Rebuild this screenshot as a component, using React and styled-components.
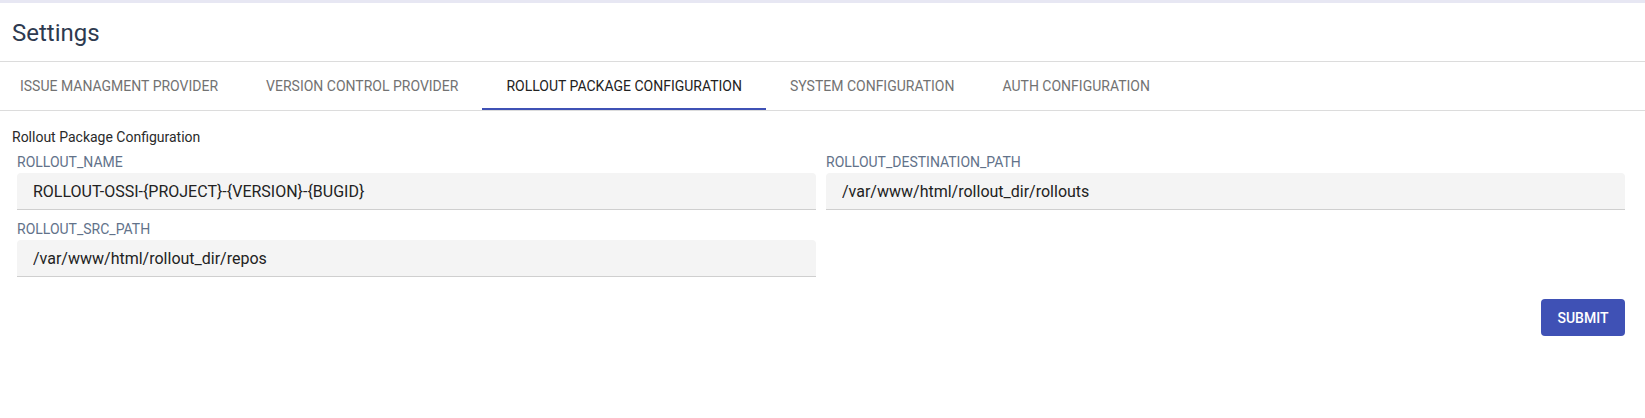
import React, { useState } from 'react';
import styled, { createGlobalStyle } from 'styled-components';

const GlobalStyle = createGlobalStyle`
  * { box-sizing: border-box; }
  body {
    margin: 0;
    font-family: Roboto, "Liberation Sans", sans-serif;
    background: #fff;
  }
`;

const Page = styled.div`
  border-top: 3px solid #e7e7f3;
  min-height: 100vh;
`;

const Header = styled.header`
  height: 59px;
  display: flex;
  align-items: center;
  padding: 2px 12px 0;
  border-bottom: 1px solid #dcdcdc;
`;

const Title = styled.h1`
  margin: 0;
  font-size: 24px;
  font-weight: 400;
  color: #2e3a50;
`;

const TabList = styled.nav`
  display: flex;
  height: 49px;
  border-bottom: 1px solid #dcdcdc;
  margin-left: -4px;
`;

const Tab = styled.button`
  position: relative;
  border: 0;
  background: none;
  padding: 0 24px;
  font-family: Roboto, "Liberation Sans", sans-serif;
  font-size: 14px;
  text-transform: uppercase;
  color: ${({ $active }) => ($active ? '#222' : '#727272')};
  cursor: pointer;

  &::after {
    content: '';
    position: absolute;
    left: 0;
    right: 0;
    bottom: 0;
    height: 2px;
    background: ${({ $active }) => ($active ? '#3f51b5' : 'transparent')};
  }
`;

const Content = styled.section`
  padding: 18px 20px 0 12px;
`;

const SectionTitle = styled.div`
  font-size: 14px;
  line-height: 17px;
  color: #2a2a2a;
  margin-bottom: 8px;
`;

const FieldGrid = styled.div`
  display: grid;
  grid-template-columns: 1fr 1fr;
  column-gap: 10px;
  row-gap: 11px;
  padding-left: 5px;
`;

const Field = styled.label`
  display: flex;
  flex-direction: column;
`;

const FieldLabel = styled.span`
  font-size: 14px;
  line-height: 16px;
  color: #62728a;
  margin-bottom: 3px;
`;

const Input = styled.input`
  height: 37px;
  border: 0;
  border-bottom: 1px solid #cfcfcf;
  border-radius: 4px 4px 0 0;
  background: #f4f4f4;
  padding: 0 16px;
  font-family: Roboto, "Liberation Sans", sans-serif;
  font-size: 16px;
  color: #222;
  outline: none;
`;

const Actions = styled.div`
  display: flex;
  justify-content: flex-end;
  margin-top: 22px;
`;

const SubmitButton = styled.button`
  width: 84px;
  height: 37px;
  border: 0;
  border-radius: 4px;
  background: #3f51b5;
  color: #fff;
  font-family: Roboto, "Liberation Sans", sans-serif;
  font-size: 14px;
  font-weight: 500;
  text-transform: uppercase;
  cursor: pointer;
`;

const tabs = [
  'Issue Managment Provider',
  'Version Control Provider',
  'Rollout Package Configuration',
  'System Configuration',
  'Auth Configuration',
];

export default function App() {
  const [active, setActive] = useState(2);
  const [values, setValues] = useState({
    ROLLOUT_NAME: 'ROLLOUT-OSSI-{PROJECT}-{VERSION}-{BUGID}',
    ROLLOUT_DESTINATION_PATH: '/var/www/html/rollout_dir/rollouts',
    ROLLOUT_SRC_PATH: '/var/www/html/rollout_dir/repos',
  });

  const handleChange = (e) => {
    const { name, value } = e.target;
    setValues((prev) => ({ ...prev, [name]: value }));
  };

  return (
    <Page>
      <GlobalStyle />
      <Header>
        <Title>Settings</Title>
      </Header>
      <TabList>
        {tabs.map((t, i) => (
          <Tab key={t} $active={i === active} onClick={() => setActive(i)}>
            {t}
          </Tab>
        ))}
      </TabList>
      <Content>
        <SectionTitle>Rollout Package Configuration</SectionTitle>
        <FieldGrid>
          {Object.keys(values).map((key) => (
            <Field key={key}>
              <FieldLabel>{key}</FieldLabel>
              <Input name={key} value={values[key]} onChange={handleChange} />
            </Field>
          ))}
        </FieldGrid>
        <Actions>
          <SubmitButton type="submit">Submit</SubmitButton>
        </Actions>
      </Content>
    </Page>
  );
}
